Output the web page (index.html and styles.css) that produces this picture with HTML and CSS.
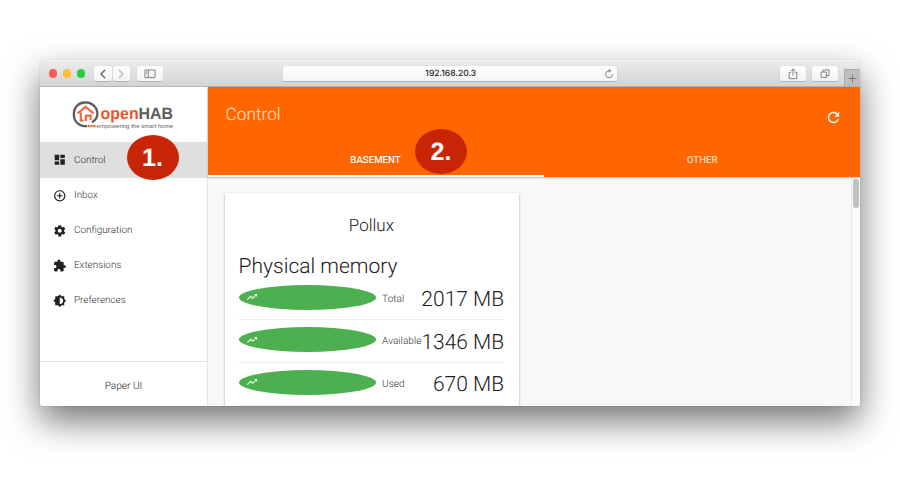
FILE: index.html
```html
<!DOCTYPE html>
<html lang="en">
<head>
<meta charset="utf-8">
<title>Paper UI</title>
<link rel="stylesheet" href="styles.css">
</head>
<body>
<div class="window">
  <header class="toolbar">
    <div class="lights"><i class="red"></i><i class="yellow"></i><i class="green"></i></div>
    <div class="history">
      <span class="btn back"><svg width="8" height="10" viewBox="0 0 8 10"><path d="M6 1 2 5l4 4" fill="none" stroke="#555" stroke-width="1.2"/></svg></span>
      <span class="btn fwd"><svg width="8" height="10" viewBox="0 0 8 10"><path d="M2 1l4 4-4 4" fill="none" stroke="#b5b5b5" stroke-width="1.1"/></svg></span>
    </div>
    <span class="btn side"><svg width="12" height="10" viewBox="0 0 12 10"><path d="M.9 1h10.2v7.6H.9zM4.4 1v7.6M2 3h1.2M2 4.6h1.2" fill="none" stroke="#777" stroke-width=".9"/></svg></span>
    <div class="address"><span>192.168.20.3</span><svg class="reload" width="10" height="10" viewBox="0 0 10 10"><path d="M5.2 1.8A3.5 3.5 0 1 0 8.5 5" fill="none" stroke="#888" stroke-width="1"/><path d="M4.8 0v3.7l2.8-1.9z" fill="#888"/></svg></div>
    <span class="btn share"><svg width="12" height="12" viewBox="0 0 12 12"><path d="M4.2 4.3H2.2v6.4h7.6V4.3H7.8M6 7.4V1.1M4 3l2-2 2 2" fill="none" stroke="#777" stroke-width=".9"/></svg></span>
    <span class="btn tabs-btn"><svg width="12" height="12" viewBox="0 0 12 12"><path d="M2 4h5.4v5.4H2zM4 4V2h6v5.6H7.4" fill="none" stroke="#777" stroke-width=".9"/></svg></span>
    <span class="newtab"><svg width="9" height="9" viewBox="0 0 9 9"><path d="M4.5.5v8M.5 4.5h8" stroke="#777" stroke-width="1"/></svg></span>
  </header>
  <div class="app">
    <aside class="sidebar">
      <div class="logo">
        <svg width="104" height="32" viewBox="0 0 104 32">
          <path d="M15 26.100H12A11 11 0 0 1 1.900 15V13A11 11 0 0 1 13 2.500 11.600 11.600 0 0 1 25.400 13.600 10 10 0 0 1 20 22.300" fill="none" stroke="#5c5c5c" stroke-width="2.300"/>
          <path d="M5.600 13.300 13.600 7l8 6.300M8.800 12.500v8h3M13.800 21v-6M18.600 20v-4.400h-4.800" fill="none" stroke="#ec6a45" stroke-width="2.200"/>
          <path d="M15.600 24.900h2.100v2.400h-2.100zm2.900 0h2.100v2.400h-2.100zm2.900 0h2.100v2.400h-2.100z" fill="#e9602f"/>
          <text class="brand" x="28.600" y="19" textLength="72.500" lengthAdjust="spacingAndGlyphs"><tspan fill="#e8562a">open</tspan><tspan fill="#5c5c5c">HAB</tspan></text>
          <text class="slogan" x="24.600" y="27.600" textLength="76.500" lengthAdjust="spacingAndGlyphs" fill="#626262">empowering the smart home</text>
        </svg>
      </div>
      <nav class="menu">
        <a class="item active"><svg class="icon" viewBox="0 0 24 24"><path d="M3 13h8V3H3v10zm0 8h8v-6H3v6zm10 0h8V11h-8v10zm0-18v6h8V3h-8z"/></svg>Control</a>
        <a class="item"><svg class="icon" viewBox="0 0 24 24"><path d="M13 7h-2v4H7v2h4v4h2v-4h4v-2h-4V7zm-1-5C6.48 2 2 6.48 2 12s4.48 10 10 10 10-4.480 10-10S17.520 2 12 2zm0 18c-4.410 0-8-3.590-8-8s3.590-8 8-8 8 3.590 8 8-3.590 8-8 8z"/></svg>Inbox</a>
        <a class="item"><svg class="icon" viewBox="0 0 24 24"><path d="M19.43 12.98c.04-.32.07-.64.07-.98s-.03-.66-.07-.98l2.110-1.650c.19-.15.24-.42.12-.64l-2-3.460c-.12-.22-.39-.3-.61-.22l-2.490 1c-.52-.4-1.080-.73-1.690-.98l-.38-2.650C14.460 2.180 14.250 2 14 2h-4c-.25 0-.46.18-.49.42l-.38 2.650c-.61.25-1.170.59-1.690.98l-2.490-1c-.23-.09-.49 0-.61.22l-2 3.460c-.13.22-.07.49.12.64l2.110 1.650c-.04.32-.07.65-.07.98s.03.66.07.98l-2.110 1.650c-.19.15-.24.42-.12.64l2 3.460c.12.22.39.3.61.22l2.490-1c.52.4 1.080.73 1.690.98l.38 2.650c.03.24.24.42.49.42h4c.25 0 .46-.18.49-.42l.38-2.650c.61-.25 1.170-.59 1.690-.98l2.490 1c.23.09.49 0 .61-.22l2-3.460c.12-.22.07-.49-.12-.64l-2.110-1.650zM12 15.500c-1.930 0-3.500-1.570-3.500-3.500s1.570-3.500 3.500-3.500 3.500 1.570 3.500 3.500-1.570 3.500-3.500 3.500z"/></svg>Configuration</a>
        <a class="item"><svg class="icon" viewBox="0 0 24 24"><path d="M20.500 11H19V7c0-1.100-.9-2-2-2h-4V3.500C13 2.120 11.880 1 10.500 1S8 2.120 8 3.500V5H4c-1.100 0-1.990.9-1.990 2v3.800H3.500c1.490 0 2.700 1.210 2.700 2.700s-1.210 2.700-2.700 2.700H2V20c0 1.100.9 2 2 2h3.800v-1.500c0-1.490 1.210-2.700 2.700-2.700 1.490 0 2.700 1.210 2.700 2.700V22H17c1.100 0 2-.9 2-2v-4h1.500c1.380 0 2.500-1.120 2.500-2.500S21.880 11 20.500 11z"/></svg>Extensions</a>
        <a class="item"><svg class="icon" viewBox="0 0 24 24"><path d="M20 15.310L23.310 12 20 8.690V4h-4.690L12 .69 8.690 4H4v4.690L.69 12 4 15.310V20h4.690L12 23.310 15.310 20H20v-4.690zM12 18V6c3.310 0 6 2.690 6 6s-2.690 6-6 6z"/></svg>Preferences</a>
      </nav>
      <div class="foot">Paper UI</div>
    </aside>
    <main class="main">
      <div class="head">
        <div class="title"><h1>Control</h1><svg class="refresh" viewBox="0 0 24 24"><path d="M17.650 6.350C16.200 4.900 14.210 4 12 4c-4.420 0-7.990 3.580-7.990 8s3.570 8 7.990 8c3.730 0 6.840-2.550 7.730-6h-2.080c-.82 2.330-3.040 4-5.650 4-3.310 0-6-2.690-6-6s2.690-6 6-6c1.660 0 3.140.69 4.220 1.780L13 11h7V4l-2.350 2.350z"/></svg></div>
        <div class="tabs"><div class="tab on">BASEMENT</div><div class="tab">OTHER</div></div>
      </div>
      <div class="content">
        <section class="card">
          <h2>Pollux</h2>
          <h3>Physical memory</h3>
          <div class="row"><span class="oval"><svg viewBox="0 0 24 24"><path d="M16 6l2.290 2.290-4.880 4.880-4-4L2 16.590 3.410 18l6-6 4 4 6.300-6.290L22 12V6z"/></svg></span><span class="label">Total</span><span class="value">2017 MB</span></div>
          <div class="row"><span class="oval"><svg viewBox="0 0 24 24"><path d="M16 6l2.290 2.290-4.880 4.880-4-4L2 16.590 3.410 18l6-6 4 4 6.300-6.290L22 12V6z"/></svg></span><span class="label">Available</span><span class="value">1346 MB</span></div>
          <div class="row"><span class="oval"><svg viewBox="0 0 24 24"><path d="M16 6l2.290 2.290-4.880 4.880-4-4L2 16.590 3.410 18l6-6 4 4 6.300-6.290L22 12V6z"/></svg></span><span class="label">Used</span><span class="value">670 MB</span></div>
        </section>
        <div class="scroll"><i></i></div>
      </div>
    </main>
  </div>
</div>
<div class="marker one">1.</div>
<div class="marker two">2.</div>
</body>
</html>
```
FILE: styles.css
```css
* { box-sizing: border-box; }
body {
  margin: 0;
  width: 900px;
  height: 500px;
  padding: 60px 0 0 40px;
  background: #fff;
  overflow: hidden;
  position: relative;
  font-family: Roboto, "Liberation Sans", sans-serif;
  font-weight: 300;
  color: #212121;
  text-rendering: geometricPrecision;
}
svg { display: block; flex: none; }
.window {
  width: 820.4px;
  height: 345.6px;
  border-radius: 3px;
  overflow: hidden;
  display: flex;
  flex-direction: column;
  box-shadow: 0 15px 35px rgba(0, 0, 0, .55), 0 0 1px rgba(0, 0, 0, .4);
}
.toolbar {
  height: 27px;
  flex: none;
  display: flex;
  align-items: center;
  background: linear-gradient(#ebebeb, #d4d4d4);
  border-top: 1px solid #f4f4f4;
  border-bottom: 1px solid #b4b4b4;
  padding-left: 8.500px;
}
.lights { display: flex; gap: 5.500px; width: 45px; }
.lights i { width: 8.500px; height: 8.500px; border-radius: 50%; }
.red { background: #fc5b57; }
.yellow { background: #fdbe2f; }
.green { background: #2acb42; }
.btn {
  height: 15px;
  border-radius: 2.500px;
  background: linear-gradient(#fdfdfd, #f4f4f4);
  box-shadow: 0 .5px 1px rgba(0, 0, 0, .18);
  display: flex;
  align-items: center;
  justify-content: center;
}
.history { display: flex; gap: 1px; margin-right: 7px; }
.back { width: 18px; }
.fwd { width: 17px; }
.side { width: 26px; margin-right: 120px; }
.address {
  width: 334.500px;
  height: 15px;
  border-radius: 2.500px;
  background: linear-gradient(#fdfdfd, #f5f5f5);
  box-shadow: 0 .5px 1px rgba(0, 0, 0, .18);
  display: flex;
  align-items: center;
  font: 500 8.500px/15px Inter, sans-serif;
  color: #222;
  margin-right: 163px;
}
.address span { flex: 1; text-align: center; padding: 2px 0 0 20px; }
.reload { margin: 0 3.500px 0 4.500px; }
.share { width: 26px; margin-right: 6px; }
.tabs-btn { width: 26px; margin-right: 5.500px; }
.newtab {
  flex: 1;
  height: 17px;
  align-self: flex-end;
  background: #bebebe;
  border: 1px solid #aaa;
  border-width: 1px 0 0 1px;
  display: flex;
  align-items: center;
  justify-content: center;
}
.app { flex: 1; min-height: 0; display: flex; }
.sidebar {
  width: 168px;
  flex: none;
  background: #fff;
  border-right: 1px solid #e4e4e4;
  display: flex;
  flex-direction: column;
}
.logo { height: 55px; padding: 13px 0 0 32px; }
.brand { font: 700 16.500px "Liberation Sans", sans-serif; }
.slogan { font: 400 5.500px "Liberation Sans", sans-serif; }
.menu { flex: 1; display: flex; flex-direction: column; }
.item {
  height: 35px;
  flex: none;
  display: flex;
  align-items: center;
  gap: 7.500px;
  padding-left: 13px;
  font-size: 9.900px;
  color: #2e2e2e;
}
.active { height: 36px; background: #dfdfdf; }
.icon { width: 13.500px; height: 13.500px; fill: #212121; }
.foot {
  height: 44.500px;
  flex: none;
  border-top: 1px solid #e0e0e0;
  display: flex;
  align-items: center;
  justify-content: center;
  padding-top: 5px;
  font-size: 10.100px;
}
.main { flex: 1; min-width: 0; display: flex; flex-direction: column; }
.head {
  height: 90px;
  flex: none;
  background: #ff6600;
  color: #fff;
  display: flex;
  flex-direction: column;
  position: relative;
  box-shadow: 0 1px 2px rgba(0, 0, 0, .25);
}
.title { height: 55px; display: flex; align-items: center; justify-content: space-between; padding: 0 18.500px 0 17.500px; }
.title h1 { margin: 0; font-size: 17.300px; font-weight: 300; color: #ffe3d1; }
.refresh { width: 17px; height: 17px; fill: #fff; margin-top: 6px; }
.tabs { flex: 1; display: flex; }
.tab {
  flex: 1;
  display: flex;
  align-items: center;
  justify-content: center;
  font-size: 9.700px;
  font-weight: 500;
  color: #ffd4b5;
  padding-top: 1px;
}
.tab.on { flex: none; width: 336px; color: #fff; border-bottom: 2px solid #fff; padding: 3px 1px 0 0; }
.content { flex: 1; min-height: 0; background: #f8f8f8; display: flex; justify-content: space-between; }
.card {
  width: 294px;
  height: 260px;
  margin: 16.400px 0 0 16.600px;
  background: #fff;
  box-shadow: 0 .5px 2.500px rgba(0, 0, 0, .3);
  padding: 21px 14.500px 0 14px;
}
.card h2 { margin: 0; font-size: 17px; line-height: 24px; font-weight: 300; text-align: center; }
.card h3 { margin: 16px 0 -2.600px; font-size: 21px; line-height: 26px; font-weight: 300; }
.row {
  height: 42.600px;
  display: flex;
  align-items: center;
  border-bottom: 1px solid #ececec;
}
.oval {
  width: 137px;
  height: 25px;
  flex: none;
  border-radius: 50%;
  background: #4caf50;
  display: flex;
  align-items: center;
  padding-left: 7px;
  margin-top: -3px;
}
.oval svg { width: 12px; height: 12px; fill: #fff; }
.label { font-size: 10.100px; margin-left: 6.500px; padding-top: 1px; color: #333; }
.value { font-size: 21px; margin-left: auto; padding-top: 3px; white-space: nowrap; }
.scroll { width: 9.500px; background: #fafafa; border-left: 1px solid #e8e8e8; padding: 2px 0 0 1.500px; }
.scroll i { display: block; width: 5.500px; height: 28.500px; border-radius: 3px; background: #c1c1c1; }
.marker {
  position: absolute;
  width: 52px;
  height: 45px;
  border-radius: 50%;
  background: #c82506;
  color: #fff;
  font: 700 25px/46px "Liberation Sans", sans-serif;
  text-align: center;
}
.one { left: 126.500px; top: 135px; }
.two { left: 415px; top: 128.500px; }
```
